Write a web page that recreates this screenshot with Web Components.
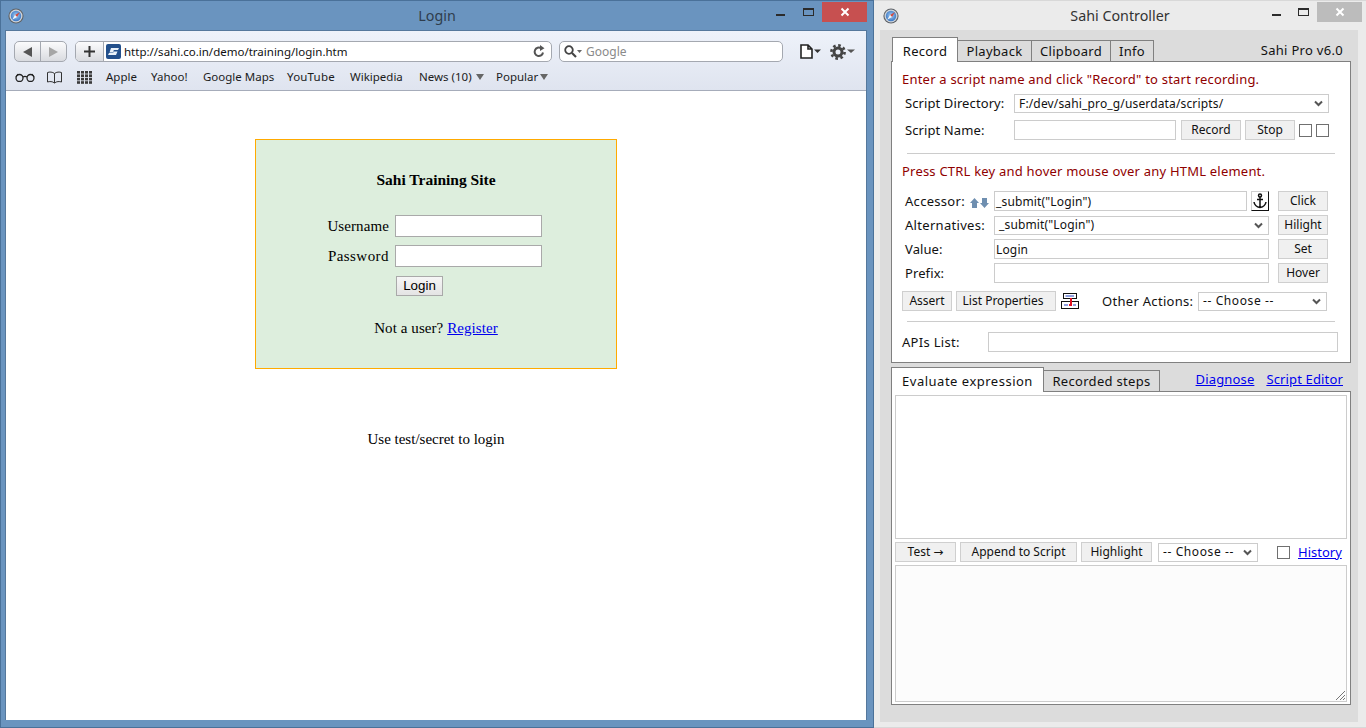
<!DOCTYPE html>
<html>
<head>
<meta charset="utf-8">
<title>Sahi</title>
<style>
    html, body { margin: 0; height: 100%; overflow: hidden; background: #fff; }
</style>
</head>
<body>
<app-desktop></app-desktop>
<script>
const UI_FONT = `"Noto Sans", "DejaVu Sans", sans-serif`;

const SAFARI_ICON = `
<svg width="16" height="16" viewBox="0 0 16 16">
    <defs>
        <radialGradient id="dial" cx=".5" cy=".45" r=".6">
            <stop offset="0" stop-color="#a9d0f5"/>
            <stop offset="1" stop-color="#2f6fc0"/>
        </radialGradient>
    </defs>
    <circle cx="8" cy="8" r="7.6" fill="#5f6368"/>
    <circle cx="8" cy="8" r="6.5" fill="#cfd5dc"/>
    <circle cx="8" cy="8" r="5.2" fill="url(#dial)"/>
    <path d="M11.800 4.200 L7 7 L9 9 Z" fill="#d8483a"/>
    <path d="M4.200 11.800 L7 7 L9 9 Z" fill="#f4f6f8"/>
</svg>`;

const CHEVRON = `
<svg width="9" height="7" viewBox="0 0 9 7">
    <path d="M1 1.500 L4.500 5 L8 1.500" fill="none" stroke="#555" stroke-width="2"/>
</svg>`;

class WinCaption extends HTMLElement{
    connectedCallback(){
        const closeBg = this.getAttribute("close-bg") || "#c75050";
        const color = this.getAttribute("text-color") || "#333";
        const minGap = this.getAttribute("min-gap") || "14";
        const iconLeft = this.getAttribute("icon-left") || "7";
        this.attachShadow({mode: "open"}).innerHTML = `
        <style>
            :host { display: flex; align-items: flex-start; height: ${this.getAttribute("h") || 29}px; position: relative; }
            .icon { margin: 7px 0 0 ${iconLeft}px; width: 16px; height: 16px; }
            .title {
                position: absolute; left: 0; right: 0; top: 4px; text-align: center;
                font: 14.3px/21px ${UI_FONT}; color: ${color};
            }
            .ctrls { margin-left: auto; display: flex; align-items: flex-start; padding-right: ${this.getAttribute("pad") || 6}px; position: relative; }
            .min { width: 9px; height: 2px; background: #2b2b2b; margin-top: 13px; }
            .max { height: 5px; border: 1px solid #2b2b2b; border-top-width: 2px; width: 9px; margin: 7px 0 0 ${minGap}px; box-sizing: content-box; }
            .close {
                width: 45px; height: 20px; background: ${closeBg}; margin: 1px 0 0 8px;
                display: flex; align-items: center; justify-content: center;
            }
        </style>
        <div class="icon">${SAFARI_ICON}</div>
        <div class="title"><slot></slot></div>
        <div class="ctrls">
            <div class="min"></div>
            <div class="max"></div>
            <div class="close">
                <svg width="10" height="10" viewBox="0 0 10 10"><path d="M1.500 1.500 L8.500 8.500 M8.500 1.500 L1.500 8.500" stroke="#fff" stroke-width="2"/></svg>
            </div>
        </div>
        `;
    }
}

class SafariToolbar extends HTMLElement{
    connectedCallback(){
        const dots = [];
        for(let r = 0; r < 4; r++){
            for(let c = 0; c < 4; c++){
                dots.push(`<rect x="${c * 4}" y="${r * 3.4}" width="3" height="2.6"/>`);
            }
        }
        this.attachShadow({mode: "open"}).innerHTML = `
        <style>
            :host {
                display: block; height: 60px; box-sizing: border-box; padding-top: 10px;
                background: linear-gradient(#eef2fa, #dfe4ef);
                border-bottom: 1px solid #a6acba;
                font: 11.5px/16px ${UI_FONT}; color: #1c1c1c;
            }
            .row1 { display: flex; height: 21px; padding-left: 8px; }
            .nav {
                width: 53px; box-sizing: border-box; display: flex;
                border: 1px solid #a4a8b0; border-radius: 5px;
                background: linear-gradient(#fbfbfc, #d9dbe0);
            }
            .nav div { flex: 1; display: flex; align-items: center; justify-content: center; }
            .nav div + div { border-left: 1px solid #a4a8b0; }
            .url {
                width: 477px; margin-left: 8px; box-sizing: border-box; display: flex; align-items: center;
                border: 1px solid #a4a8b0; border-radius: 5px; background: #fff; overflow: hidden;
            }
            .plus {
                width: 27px; height: 100%; flex: none; display: flex; align-items: center; justify-content: center;
                background: linear-gradient(#fbfbfc, #d9dbe0); border-right: 1px solid #a4a8b0;
            }
            .fav { margin: 0 3px 0 2px; display: flex; }
            .addr { font-size: 11.5px; color: #111; }
            .reload { margin-left: auto; margin-right: 6px; display: flex; }
            .search {
                width: 224px; margin-left: 7px; box-sizing: border-box; display: flex; align-items: center;
                border: 1px solid #a4a8b0; border-radius: 5px; background: #fff; padding-left: 4px; color: #8a8a8a;
            }
            .search span { margin-left: 3px; font-size: 12px; }
            .act { display: flex; align-items: center; }
            .row2 { display: flex; align-items: center; height: 16px; margin-top: 7px; padding-left: 9px; }
            .row2 svg { flex: none; }
            .b { flex: none; white-space: nowrap; display: flex; align-items: center; }
            .tri { width: 0; height: 0; border: 4px solid transparent; border-top: 6px solid #666; border-bottom: 0; margin-left: 4px; }
        </style>
        <div class="row1">
            <div class="nav">
                <div><svg width="9" height="10"><path d="M9 0 V10 L0 5 Z" fill="#555"/></svg></div>
                <div><svg width="9" height="10"><path d="M0 0 V10 L9 5 Z" fill="#a6a6a6"/></svg></div>
            </div>
            <div class="url">
                <div class="plus"><svg width="11" height="11"><path d="M5.500 0 V11 M0 5.500 H11" stroke="#333" stroke-width="2"/></svg></div>
                <div class="fav">
                    <svg width="15" height="15" viewBox="0 0 15 15">
                        <rect width="15" height="15" rx="2" fill="#23508c"/>
                        <path d="M5 4 H13 L12 6 H8 L7 7.500 H11.500 L10 11 H2 L3 9 H7 L8 8.500 H3.500 Z" fill="#eaf2fa"/>
                    </svg>
                </div>
                <span class="addr">http://sahi.co.in/demo/training/login.htm</span>
                <div class="reload">
                    <svg width="12" height="13" viewBox="0 0 12 13">
                        <path d="M10 7.500 A4.200 4.200 0 1 1 8 3.200" fill="none" stroke="#555" stroke-width="2"/>
                        <path d="M7 0 L11.500 3.200 L7 6 Z" fill="#555"/>
                    </svg>
                </div>
            </div>
            <div class="search">
                <svg width="19" height="13" viewBox="0 0 19 13">
                    <circle cx="5" cy="5" r="3.800" fill="none" stroke="#444" stroke-width="1.800"/>
                    <path d="M8 8 L12 12" stroke="#444" stroke-width="2.200"/>
                    <path d="M13 5 H18 L15.500 8 Z" fill="#666"/>
                </svg>
                <span>Google</span>
            </div>
            <div class="act" style="margin-left:17px">
                <svg width="21" height="15" viewBox="0 0 21 15">
                    <path d="M1 1 H8 L12 5 V14 H1 Z M8 1 V5 H12" fill="#fff" stroke="#222" stroke-width="1.600"/>
                    <path d="M14 5.500 H21 L17.500 9 Z" fill="#333"/>
                </svg>
            </div>
            <div class="act" style="margin-left:9px">
                <svg width="25" height="16" viewBox="0 0 25 16">
                    <circle cx="8" cy="8" r="4" fill="none" stroke="#444" stroke-width="3"/>
                    <circle cx="8" cy="8" r="6.600" fill="none" stroke="#444" stroke-width="2.600" stroke-dasharray="2.600 2.580"/>
                    <path d="M17 5.500 H25 L21 9 Z" fill="#555"/>
                </svg>
            </div>
        </div>
        <div class="row2">
            <svg width="20" height="9" viewBox="0 0 20 9" style="margin-right:11px">
                <circle cx="4.500" cy="5" r="3.500" fill="none" stroke="#222" stroke-width="1.300"/>
                <circle cx="15.500" cy="5" r="3.500" fill="none" stroke="#222" stroke-width="1.300"/>
                <path d="M8 4 Q10 2.800 12 4 M1 4 L3 1 M19 4 L17 1" fill="none" stroke="#222" stroke-width="1.100"/>
            </svg>
            <svg width="17" height="13" viewBox="0 0 17 13" style="margin-right:14px">
                <path d="M8.500 2.500 C6.500 .8 3.500 .8 1.500 1.500 V11 C3.500 10.300 6.500 10.300 8.500 12 C10.500 10.300 13.500 10.300 15.500 11 V1.500 C13.500 .8 10.500 .8 8.500 2.500 V12" fill="none" stroke="#333"/>
            </svg>
            <svg width="15" height="13" viewBox="0 0 15 13" fill="#3a3a3a" style="margin-right:14px">${dots.join("")}</svg>
            <div class="b" style="width:45px">Apple</div>
            <div class="b" style="width:52px">Yahoo!</div>
            <div class="b" style="width:84px">Google Maps</div>
            <div class="b" style="width:63px;letter-spacing:.2px">YouTube</div>
            <div class="b" style="width:69px">Wikipedia</div>
            <div class="b" style="width:77px">News (10)<i class="tri"></i></div>
            <div class="b">Popular<i class="tri" style="margin-left:2px"></i></div>
        </div>
        `;
    }
}

class LoginCard extends HTMLElement{
    connectedCallback(){
        this.attachShadow({mode: "open"}).innerHTML = `
        <style>
            :host {
                display: block; width: 362px; height: 230px; box-sizing: border-box; margin: 48px auto 0;
                background: #ddeedd; border: 1px solid #ffaa00;
                font: 15px/18px "Liberation Serif", serif; color: #000; text-align: center;
                padding-top: 31px;
            }
            h3 { margin: 0; font-size: 15.5px; line-height: 18px; font-weight: bold; }
            .row { display: flex; align-items: center; height: 22px; letter-spacing: .1px; }
            .row span { width: 139px; text-align: right; padding-right: 6px; box-sizing: border-box; }
            .box { width: 147px; height: 22px; box-sizing: border-box; background: #fff; border: 1px solid #a9a9a9; }
            .btn {
                display: block; width: 47px; height: 20px; box-sizing: border-box; margin: 9px 0 0 140px;
                border: 1px solid #a9a9a9; background: linear-gradient(#f6f6f6, #e4e4e4);
                font: 13.33px/18px "Liberation Sans", sans-serif; text-align: center; color: #000;
            }
            p { margin: 23px 0 0; letter-spacing: .08px; }
            a { color: #00e; }
        </style>
        <h3>Sahi Training Site</h3>
        <div class="row" style="margin-top:26px"><span>Username</span><div class="box"></div></div>
        <div class="row" style="margin-top:8px"><span style="letter-spacing:.45px">Password</span><div class="box"></div></div>
        <div class="btn">Login</div>
        <p>Not a user? <a href="#">Register</a></p>
        `;
    }
}

class BrowserWindow extends HTMLElement{
    connectedCallback(){
        this.attachShadow({mode: "open"}).innerHTML = `
        <style>
            :host {
                display: flex; flex-direction: column; flex: 0 0 874px; height: 728px; box-sizing: border-box;
                background: #6a94bf; border: 1px solid #4a7199; padding: 0 6px 7px 4px;
            }
            win-caption { margin: 0 -6px 0 -4px; }
            .content { flex: 1; display: flex; flex-direction: column; border: 1px solid #55789c; border-bottom: 0; }
            .page { flex: 1; background: #fff; }
            .hint {
                margin-top: 61px; text-align: center;
                font: 15px/18px "Liberation Serif", serif; color: #000;
            }
        </style>
        <win-caption text-color="#2f3d4d" pad="6" min-gap="18">Login</win-caption>
        <div class="content">
            <safari-toolbar></safari-toolbar>
            <div class="page">
                <login-card></login-card>
                <div class="hint">Use test/secret to login</div>
            </div>
        </div>
        `;
    }
}

class SahiBtn extends HTMLElement{
    connectedCallback(){
        this.attachShadow({mode: "open"}).innerHTML = `
        <style>
            :host {
                display: flex; flex: none; align-items: center; justify-content: center; height: 20px; box-sizing: border-box;
                background: #f0f0f0; border: 1px solid #cfcfcf; font: 12px/16px ${UI_FONT}; color: #111; white-space: nowrap;
            }
        </style>
        <slot></slot>
        `;
    }
}

class SahiField extends HTMLElement{
    connectedCallback(){
        const isSelect = this.hasAttribute("select");
        this.attachShadow({mode: "open"}).innerHTML = `
        <style>
            :host {
                display: flex; flex: none; align-items: center; height: ${isSelect ? 19 : 20}px; box-sizing: border-box;
                background: #fff; border: 1px solid #cccccc; font: 12px/16px ${UI_FONT}; color: #111; white-space: nowrap;
                letter-spacing: .15px;
                padding: ${isSelect ? 0 : 2}px ${isSelect ? 5 : 1}px 0 ${isSelect ? 4 : 1}px;
            }
            .chev { margin-left: auto; display: flex; }
        </style>
        <slot></slot>
        ${isSelect ? `<div class="chev">${CHEVRON}</div>` : ""}
        `;
    }
}

class SahiTabs extends HTMLElement{
    connectedCallback(){
        this.attachShadow({mode: "open"}).innerHTML = `
        <style>
            :host {
                display: flex; align-items: flex-end; position: relative; z-index: 1; margin-bottom: -1px;
                font: 13px/16px ${UI_FONT}; letter-spacing: .3px; color: #111; height: 25px;
            }
        </style>
        <slot></slot>
        `;
    }
}

class RecordPanel extends HTMLElement{
    connectedCallback(){
        this.attachShadow({mode: "open"}).innerHTML = `
        <style>
            :host {
                display: block; height: 302px; box-sizing: border-box; width: 460px;
                background: #fff; border: 1px solid #808080; padding: 9px 0 0 10px;
                font: 13px/17px ${UI_FONT}; color: #111;
            }
            .red { color: #8f0000; height: 17px; white-space: nowrap; letter-spacing: .21px; }
            .row { display: flex; align-items: center; height: 20px; }
            .lbl { flex: none; white-space: nowrap; letter-spacing: .1px; }
            .lbl.w { letter-spacing: .3px; }
            hr { border: 0; height: 1px; background: #cccccc; width: 428px; margin: 0 0 0 5px; }
            .cb { width: 13px; height: 13px; box-sizing: border-box; border: 1px solid #707070; background: #fff; flex: none; }
            .arrows { display: flex; flex: none; padding-top: 3px; }
            .anchor { width: 18px; height: 20px; flex: none; box-sizing: border-box; border: 1px solid #cfcfcf; border-right: 1px solid #111; border-bottom: 1px solid #111; background: #fff; margin-left: 4px; display: flex; align-items: center; justify-content: center; }
        </style>
        <div class="red">Enter a script name and click "Record" to start recording.</div>
        <div class="row" style="margin-top:6px;height:19px;padding-left:3px">
            <div class="lbl" style="width:109px">Script Directory:</div>
            <sahi-field select style="width:315px">F:/dev/sahi_pro_g/userdata/scripts/</sahi-field>
        </div>
        <div class="row" style="margin-top:7px;padding-left:3px">
            <div class="lbl" style="width:109px">Script Name:</div>
            <sahi-field style="width:162px"></sahi-field>
            <sahi-btn style="width:60px;margin-left:5px">Record</sahi-btn>
            <sahi-btn style="width:50px;margin-left:4px">Stop</sahi-btn>
            <div class="cb" style="margin-left:4px"></div>
            <div class="cb" style="margin-left:4px"></div>
        </div>
        <hr style="margin-top:13px">
        <div class="red" style="margin-top:9px">Press CTRL key and hover mouse over any HTML element.</div>
        <div class="row" style="margin-top:11px;padding-left:3px">
            <div class="lbl w" style="width:65px">Accessor:</div>
            <div class="arrows" style="width:24px">
                <svg width="19" height="10" viewBox="0 0 19 10" fill="#6f8fb0">
                    <path d="M4.500 0 L9 5 H7 V10 H2 V5 H0 Z"/>
                    <path d="M14.500 10 L19 5 H17 V0 H12 V5 H10 Z"/>
                </svg>
            </div>
            <sahi-field style="width:253px">_submit("Login")</sahi-field>
            <div class="anchor">
                <svg width="14" height="16" viewBox="0 0 14 16" fill="none" stroke="#111" stroke-width="1.500">
                    <circle cx="7" cy="2.500" r="1.500"/>
                    <path d="M7 4 V14.500 M4 6.500 H10 M1 9 C1.500 12.500 4 14 7 14.500 C10 14 12.500 12.500 13 9"/>
                </svg>
            </div>
            <sahi-btn style="width:50px;margin-left:9px">Click</sahi-btn>
        </div>
        <div class="row" style="margin-top:4px;padding-left:3px">
            <div class="lbl w" style="width:89px">Alternatives:</div>
            <sahi-field select style="width:275px">_submit("Login")</sahi-field>
            <sahi-btn style="width:50px;margin-left:9px">Hilight</sahi-btn>
        </div>
        <div class="row" style="margin-top:4px;padding-left:3px">
            <div class="lbl" style="width:89px">Value:</div>
            <sahi-field style="width:275px">Login</sahi-field>
            <sahi-btn style="width:50px;margin-left:9px">Set</sahi-btn>
        </div>
        <div class="row" style="margin-top:4px;padding-left:3px">
            <div class="lbl" style="width:89px">Prefix:</div>
            <sahi-field style="width:275px"></sahi-field>
            <sahi-btn style="width:50px;margin-left:9px">Hover</sahi-btn>
        </div>
        <div class="row" style="margin-top:8px">
            <sahi-btn style="width:50px">Assert</sahi-btn>
            <sahi-btn style="width:100px;margin-left:4px;padding-right:6px">List Properties</sahi-btn>
            <svg width="18" height="16" viewBox="0 0 18 16" style="margin-left:5px;flex:none">
                <rect x="2.500" y=".5" width="13" height="5" fill="#fff" stroke="#111"/>
                <rect x=".5" y="8.500" width="17" height="7" fill="#fff" stroke="#111"/>
                <path d="M4.500 3 H13 M3 12 H7 M12 12 H15" stroke="#2040c0"/>
                <path d="M10 5 V12 H8" fill="none" stroke="#e01020" stroke-width="2"/>
            </svg>
            <div class="lbl w" style="width:96px;margin-left:23px">Other Actions:</div>
            <sahi-field select style="width:129px;letter-spacing:.6px">-- Choose --</sahi-field>
        </div>
        <hr style="margin-top:10px">
        <div class="row" style="margin-top:10px">
            <div class="lbl w" style="width:86px">APIs List:</div>
            <sahi-field style="width:350px"></sahi-field>
        </div>
        `;
    }
}

class EvalPanel extends HTMLElement{
    connectedCallback(){
        this.attachShadow({mode: "open"}).innerHTML = `
        <style>
            :host {
                display: block; width: 460px; height: 314px; box-sizing: border-box;
                background: #fff; border: 1px solid #808080; padding: 3px;
                font: 13px/17px ${UI_FONT}; color: #111;
            }
            .area { box-sizing: border-box; border: 1px solid #cccccc; background: #fff; width: 452px; }
            .row { display: flex; align-items: center; height: 20px; margin: 3px 0; }
            .cb { width: 13px; height: 13px; box-sizing: border-box; border: 1px solid #707070; background: #fff; flex: none; margin-left: 19px; }
            a { color: #00e; margin-left: 8px; }
            .out { background: #fcfcfc; height: 137px; position: relative; }
            .grip { position: absolute; right: 1px; bottom: 1px; display: flex; }
        </style>
        <div class="area" style="height:144px"></div>
        <div class="row">
            <sahi-btn style="width:61px">Test →</sahi-btn>
            <sahi-btn style="width:117px;margin-left:4px">Append to Script</sahi-btn>
            <sahi-btn style="width:71px;margin-left:4px">Highlight</sahi-btn>
            <sahi-field select style="width:100px;margin-left:6px;letter-spacing:.6px">-- Choose --</sahi-field>
            <div class="cb"></div>
            <a href="#">History</a>
        </div>
        <div class="area out">
            <div class="grip">
                <svg width="9" height="9" viewBox="0 0 9 9"><path d="M0 9 L9 0 M4 9 L9 4 M7 9 L9 7" stroke="#666" stroke-width=".9"/></svg>
            </div>
        </div>
        `;
    }
}

class SahiController extends HTMLElement{
    connectedCallback(){
        this.attachShadow({mode: "open"}).innerHTML = `
        <style>
            :host {
                display: flex; flex-direction: column; flex: 0 0 492px; height: 728px; box-sizing: border-box;
                background: #ebebeb; border-top: 1px solid #d8d8d8; border-bottom: 1px solid #d8d8d8;
            }
            .inner {
                flex: none; height: 692px; box-sizing: border-box; margin: 0 8px 0 6px; background: #dcdcdc;
                padding: 7px 0 0 11px;
            }
            .tab {
                display: flex; align-items: center; justify-content: center; height: 22px; box-sizing: border-box;
                background: #dcdcdc; border: 1px solid #808080; border-left: 0; color: #111;
            }
            .tab.on { background: #fff; height: 25px; border-left: 1px solid #808080; border-bottom: 0; padding-top: 1px; }
            .first { margin-left: 1px; }
            .ver { margin-left: auto; align-self: flex-start; padding: 4px 8px 0 0; line-height: 18px; white-space: nowrap; }
            .links { margin-left: auto; align-self: flex-start; padding: 4px 8px 0 0; line-height: 16px; white-space: nowrap; letter-spacing: .15px; }
            .links a { color: #00e; margin-left: 12px; }
            sahi-tabs { width: 460px; }
            .gap { margin-top: 4px; }
            .tight { letter-spacing: .5px; }
        </style>
        <win-caption text-color="#333" close-bg="#bcbcbc" pad="4" min-gap="17" icon-left="9">Sahi Controller</win-caption>
        <div class="inner">
            <sahi-tabs>
                <div class="tab on first" style="width:66px">Record</div>
                <div class="tab" style="width:74px">Playback</div>
                <div class="tab" style="width:79px">Clipboard</div>
                <div class="tab" style="width:43px">Info</div>
                <div class="ver">Sahi Pro v6.0</div>
            </sahi-tabs>
            <record-panel></record-panel>
            <sahi-tabs class="gap">
                <div class="tab on tight" style="width:153px">Evaluate expression</div>
                <div class="tab" style="width:116px">Recorded steps</div>
                <div class="links"><a href="#">Diagnose</a><a href="#">Script Editor</a></div>
            </sahi-tabs>
            <eval-panel></eval-panel>
        </div>
        `;
    }
}

class AppDesktop extends HTMLElement{
    connectedCallback(){
        this.attachShadow({mode: "open"}).innerHTML = `
        <style>
            :host { display: flex; width: 1366px; height: 728px; }
        </style>
        <browser-window></browser-window>
        <sahi-controller></sahi-controller>
        `;
    }
}

customElements.define("win-caption", WinCaption);
customElements.define("safari-toolbar", SafariToolbar);
customElements.define("login-card", LoginCard);
customElements.define("browser-window", BrowserWindow);
customElements.define("sahi-btn", SahiBtn);
customElements.define("sahi-field", SahiField);
customElements.define("sahi-tabs", SahiTabs);
customElements.define("record-panel", RecordPanel);
customElements.define("eval-panel", EvalPanel);
customElements.define("sahi-controller", SahiController);
customElements.define("app-desktop", AppDesktop);
</script>
</body>
</html>
